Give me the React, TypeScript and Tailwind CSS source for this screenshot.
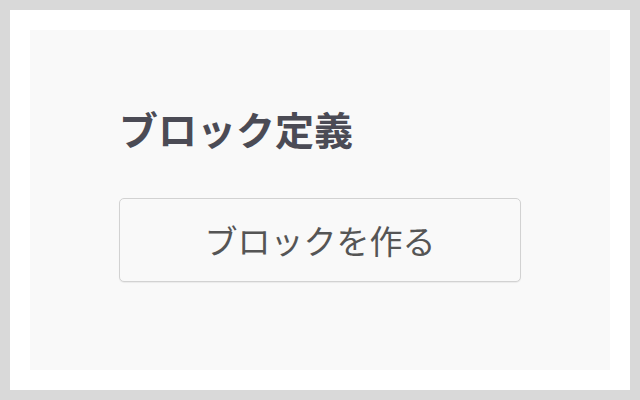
export default function App() {
  return (
    <div
      className="h-[400px] w-[640px] bg-[#d9d9d9] p-[10px]"
      style={{ fontFamily: '"Noto Sans CJK JP", sans-serif' }}
    >
      <div className="h-full bg-white p-[20px]">
        <div className="flex h-full flex-col bg-[#f9f9f9] pl-[89px] pt-[74px]">
          <h1 className="text-[39px] font-bold leading-[48px] text-[#4b4b55]">
            ブロック定義
          </h1>
          <button className="mt-[46px] flex h-[84px] w-[402px] items-center justify-center rounded-[5px] border border-[#d2d2d2] bg-[#f9f9f9] text-[33px] leading-none text-[#555] shadow-[0_1px_1px_rgba(0,0,0,0.06)]">
            ブロックを作る
          </button>
        </div>
      </div>
    </div>
  );
}
